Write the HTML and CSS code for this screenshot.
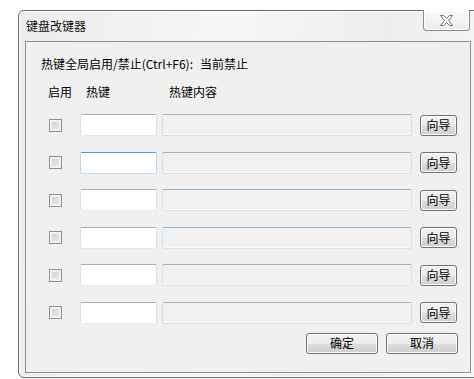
FILE: index.html
```html
<!DOCTYPE html>
<html lang="zh-CN">
<head>
	<meta charset="UTF-8">
	<title>键盘改键器</title>
	<link rel="stylesheet" href="styles.css">
</head>
<body>
	<div class="window">
		<div class="titlebar">
			<span class="title">键盘改键器</span>
			<div class="close">
				<svg width="15" height="11" viewBox="0 0 15 11"><polygon points="1.5,0.5 4.5,0.5 7.5,3.5 10.5,0.5 13.5,0.5 9.5,5.5 13.5,10.5 10.5,10.5 7.5,7.5 4.5,10.5 1.5,10.5 5.5,5.5" fill="#fff" stroke="#6b6b6b" stroke-width="1"/></svg>
			</div>
		</div>
		<div class="client">
			<div class="status">热键全局启用/禁止(Ctrl+F6):<span class="state">当前禁止</span></div>
			<div class="col-heads">
				<span class="h-enable">启用</span>
				<span class="h-key">热键</span>
				<span class="h-content">热键内容</span>
			</div>
			<div class="rows">
				<div class="row">
					<span class="check"></span>
					<span class="hotkey"></span>
					<span class="content"></span>
					<span class="btn wizard">向导</span>
				</div>
				<div class="row">
					<span class="check"></span>
					<span class="hotkey focus"></span>
					<span class="content"></span>
					<span class="btn wizard">向导</span>
				</div>
				<div class="row">
					<span class="check"></span>
					<span class="hotkey"></span>
					<span class="content hover"></span>
					<span class="btn wizard">向导</span>
				</div>
				<div class="row">
					<span class="check"></span>
					<span class="hotkey"></span>
					<span class="content hover"></span>
					<span class="btn wizard">向导</span>
				</div>
				<div class="row">
					<span class="check"></span>
					<span class="hotkey"></span>
					<span class="content hover"></span>
					<span class="btn wizard">向导</span>
				</div>
				<div class="row">
					<span class="check"></span>
					<span class="hotkey"></span>
					<span class="content"></span>
					<span class="btn wizard">向导</span>
				</div>
			</div>
			<div class="actions">
				<span class="btn action">确定</span>
				<span class="btn action">取消</span>
			</div>
		</div>
	</div>
</body>
</html>
```

FILE: styles.css
```css
body {
	margin: 0;
	background: #fff;
	overflow: hidden;
	font-family: "Noto Sans CJK SC", sans-serif;
	font-size: 12px;
	color: #000;
}

.window {
	position: relative;
	box-sizing: border-box;
	margin: 10px 0 0 18px;
	width: 470px;
	height: 368px;
	border: 1px solid #6a6a6a;
	border-radius: 6px;
	background: linear-gradient(100deg, #ececec 0%, #f7f7f7 40%, #eeeeee 70%, #f8f8f8 100%);
	box-shadow: inset 0 0 0 1px #fbfbfb;
}

.titlebar {
	display: flex;
	align-items: center;
	height: 30px;
	padding-left: 7px;
}
.titlebar .title {
	line-height: 16px;
	color: #111;
}

.close {
	position: absolute;
	top: -1px;
	left: 404px;
	box-sizing: border-box;
	width: 47px;
	height: 21px;
	border: 1px solid #8a8a8a;
	border-top: none;
	border-radius: 0 0 4px 4px;
	background: linear-gradient(#fafafa, #ececec);
	box-shadow: inset 0 0 0 1px #fff;
	display: flex;
	justify-content: center;
	align-items: center;
}

.client {
	box-sizing: border-box;
	margin-left: 6px;
	width: 446px;
	height: 332px;
	border: 1px solid #8f8f8f;
	background: #f0f0f0;
}

.status {
	padding: 14px 0 0 15px;
	line-height: 16px;
}
.status .state {
	margin-left: 7px;
}

.col-heads {
	display: flex;
	margin-top: 12px;
	padding-left: 22px;
	line-height: 16px;
}
.h-enable {
	width: 38px;
}
.h-key {
	width: 83px;
}

.rows {
	display: flex;
	flex-direction: column;
	gap: 15.6px;
	margin-top: 14px;
	padding-left: 23px;
}
.row {
	display: flex;
	align-items: center;
	height: 22px;
}

.check {
	box-sizing: border-box;
	width: 13px;
	height: 13px;
	margin-right: 18px;
	border: 1px solid #8e8f8f;
	background: linear-gradient(135deg, #c9cdd2, #eceef0);
	box-shadow: inset 0 0 0 2px #f2f2f2;
}

.hotkey {
	box-sizing: border-box;
	width: 77px;
	height: 22px;
	margin-right: 5px;
	border: 1px solid #e3e9ef;
	border-top-color: #abadb3;
	border-left-color: #dbdfe6;
	border-right-color: #dbdfe6;
	border-radius: 2px;
	background: #fff;
}
.hotkey.focus {
	border-color: #c5daed;
	border-top-color: #5794bf;
	border-left-color: #b7d5ea;
	border-right-color: #b7d5ea;
}

.content {
	box-sizing: border-box;
	width: 250px;
	height: 22px;
	margin-right: 8px;
	border: 1px solid #dadada;
	border-top-color: #adb2b5;
	border-radius: 2px;
	background: #f1f1f1;
	box-shadow: inset 0 -1px 0 #fafafa;
}
.content.hover {
	border-color: #d6e3ee;
	border-top-color: #8fb2cf;
}

.btn {
	box-sizing: border-box;
	display: flex;
	justify-content: center;
	align-items: center;
	height: 21px;
	border: 1px solid #707070;
	border-radius: 3px;
	background: linear-gradient(#f2f2f2 0%, #ebebeb 50%, #dddddd 51%, #cfcfcf 100%);
	box-shadow: inset 0 0 0 1px #fcfcfc;
	line-height: 16px;
}
.wizard {
	width: 37px;
}

.actions {
	display: flex;
	justify-content: flex-end;
	gap: 8px;
	margin-top: 9px;
	padding-right: 12px;
}
.action {
	width: 72px;
}
```
